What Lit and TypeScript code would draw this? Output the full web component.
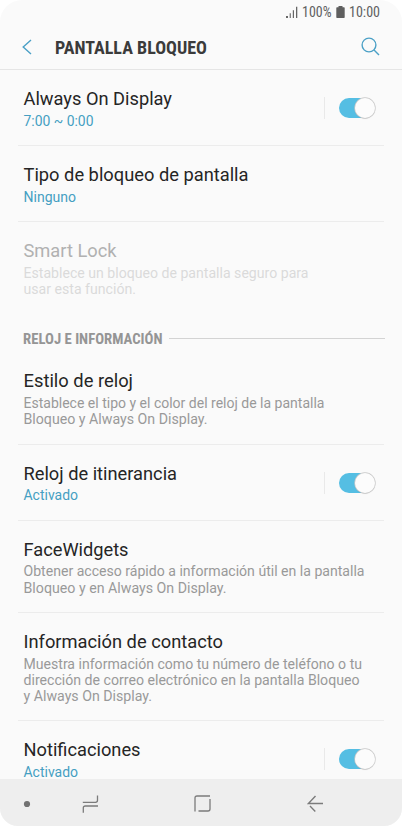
import { LitElement, html, css, svg, nothing } from "lit";
import { customElement, property } from "lit/decorators.js";

@customElement("condensed-text")
class CondensedText extends LitElement {
  @property() text = "";
  @property({ type: Number }) width = 100;
  @property({ type: Number }) size = 14;
  static styles = css`
    :host { display: block; flex: none; }
    svg { display: block; overflow: visible; }
    text { font-family: "Roboto Condensed", Roboto, sans-serif; font-stretch: 75%; fill: currentColor; }
  `;
  render() {
    const h = Math.round(this.size * 1.2);
    return html`<svg width=${this.width} height=${h}>
      ${svg`<text x="0" y=${this.size * 0.95} font-size=${this.size} textLength=${this.width} lengthAdjust="spacingAndGlyphs">${this.text}</text>`}
    </svg>`;
  }
}

@customElement("toggle-switch")
class ToggleSwitch extends LitElement {
  static styles = css`
    :host { display: flex; align-items: center; flex: none; margin-top: -1px; }
    .rule { width: 1px; height: 22px; background: #e9e9e9; margin-right: 14px; }
    .track { width: 35px; height: 20px; border-radius: 10px; background: #55bee3; display: flex; align-items: center; justify-content: flex-end; margin-right: 2px; }
    .knob { width: 20px; height: 20px; border-radius: 50%; background: #fcfcfc; box-shadow: 0 0 0 .7px #c8c8c8, 0 1px 1px rgba(0, 0, 0, .12); margin-right: -1px; flex: none; }
  `;
  render() {
    return html`<div class="rule"></div><div class="track"><div class="knob"></div></div>`;
  }
}

interface Item {
  title: string;
  tw: number;
  lines: [string, number][];
  value?: boolean;
  toggle?: boolean;
  disabled?: boolean;
  last?: boolean;
}

const lock: Item[] = [
  { title: "Always On Display", tw: 148.5, lines: [["7:00 ~ 0:00", 70]], value: true, toggle: true },
  { title: "Tipo de bloqueo de pantalla", tw: 225, lines: [["Ninguno", 52.5]], value: true },
  { title: "Smart Lock", tw: 93, lines: [["Establece un bloqueo de pantalla seguro para", 285], ["usar esta función.", 112.5]], disabled: true, last: true },
];
const clock: Item[] = [
  { title: "Estilo de reloj", tw: 109.5, lines: [["Establece el tipo y el color del reloj de la pantalla", 301], ["Bloqueo y Always On Display.", 184]] },
  { title: "Reloj de itinerancia", tw: 153.5, lines: [["Activado", 54.5]], value: true, toggle: true },
  { title: "FaceWidgets", tw: 105, lines: [["Obtener acceso rápido a información útil en la pantalla", 341], ["Bloqueo y en Always On Display.", 203]] },
  { title: "Información de contacto", tw: 199.5, lines: [["Muestra información como tu número de teléfono o tu", 338.5], ["dirección de correo electrónico en la pantalla Bloqueo", 336], ["y Always On Display.", 128.5]] },
  { title: "Notificaciones", tw: 117, lines: [["Activado", 54.5]], value: true, toggle: true, last: true },
];

@customElement("setting-row")
class SettingRow extends LitElement {
  @property({ attribute: false }) item!: Item;
  static styles = css`
    :host { display: block; padding: 0 18px; }
    .row { box-sizing: border-box; display: flex; align-items: center; justify-content: space-between; padding: 18px 8px 16px 5px; border-bottom: 1px solid #ececec; }
    .row.last { border-color: transparent; }
    .copy { margin-right: -20px; }
    svg { display: block; overflow: visible; }
    .title { font: 400 18.3px Roboto, sans-serif; fill: #252525; }
    .line { font: 400 14px Roboto, sans-serif; fill: #999; }
    .value { fill: #459fc2; }
    .disabled .title { fill: #b1b1b1; }
    .disabled .line { fill: #dadada; }
  `;
  render() {
    const i = this.item;
    return html`<div class="row ${i.last ? "last" : ""} ${i.disabled ? "disabled" : ""}">
      <div class="copy">
        <svg width=${i.tw} height="24.75">${svg`<text class="title" x=".5" y="17.3" textLength=${i.tw} lengthAdjust="spacingAndGlyphs">${i.title}</text>`}</svg>
        ${i.lines.map(([t, w]) => html`<svg width=${w} height="16.25">${svg`<text class="line ${i.value ? "value" : ""}" x=".5" y="13" textLength=${w} lengthAdjust="spacingAndGlyphs">${t}</text>`}</svg>`)}
      </div>
      ${i.toggle ? html`<toggle-switch></toggle-switch>` : nothing}
    </div>`;
  }
}

@customElement("app-root")
class AppRoot extends LitElement {
  static styles = css`
    :host { display: block; background: #fff; }
    .phone { width: 402px; height: 826px; display: flex; flex-direction: column; overflow: hidden; border-radius: 22px 22px 18px 18px; background: #fafafa; }
    svg { display: block; flex: none; }
    .status { height: 24px; flex: none; display: flex; align-items: center; justify-content: flex-end; padding-right: 22px; color: #606060; box-sizing: border-box; }
    .signal { margin-right: 4px; }
    .battery { margin: -1px 4px 0 5px; }
    .header { height: 46px; flex: none; box-sizing: border-box; display: flex; align-items: center; padding: 1px 22px 0; border-bottom: 1px solid #e5e5e5; color: #3b3b3b; }
    .heading { margin: 1px 0 0 23px; flex: 1; font-weight: 700; }
    .search { margin-top: -1px; }
    .list { flex: 1; min-height: 0; overflow: hidden; }
    .section { height: 38px; box-sizing: border-box; padding: 14px 17.5px 4px 23px; display: flex; align-items: center; gap: 6px; color: #959595; font-weight: 700; }
    .section-rule { height: 1px; flex: 1; background: #d3d3d3; }
    .nav { height: 47px; flex: none; background: #eee; display: flex; align-items: center; padding: 2px 0 0 23px; box-sizing: border-box; }
    .recent { margin-left: 51px; }
    .home { margin-left: 95px; }
    .back { margin-left: 96px; }
  `;
  render() {
    return html`<div class="phone">
      <div class="status">
        <svg class="signal" width="12" height="12" viewBox="0 0 12 12" fill="#666"><path d="M0 10h2v2H0zM3.7 7.2h1.1V12H3.7zM6.8 4.2h1.2V12H6.8zM10 .7h1.3V12H10z"/></svg>
        <condensed-text text="100%" .width=${29.5} .size=${14.6}></condensed-text>
        <svg class="battery" width="9" height="12" viewBox="0 0 9 12" fill="#5f5f5f"><path d="M2.5 0h4v1.3H8q.7 0 .7.7v9.3q0 .7-.7.7H1q-.7 0-.7-.7V2q0-.7.7-.7h1.5z"/></svg>
        <condensed-text text="10:00" .width=${31} .size=${14.6}></condensed-text>
      </div>
      <div class="header">
        <svg width="10" height="16" viewBox="0 0 10 16" fill="none" stroke="#4ba0c6" stroke-width="1.4"><path d="M9 .9 1.2 8 9 15.1"/></svg>
        <condensed-text class="heading" text="PANTALLA BLOQUEO" .width=${152} .size=${18}></condensed-text>
        <svg class="search" width="19" height="19" viewBox="0 0 19 19" fill="none" stroke="#4ba0c6" stroke-width="1.4"><circle cx="8" cy="8" r="6.9"/><path d="m12.8 12.8 5.2 5.2"/></svg>
      </div>
      <div class="list">
        ${lock.map((i) => html`<setting-row .item=${i}></setting-row>`)}
        <div class="section"><condensed-text text="RELOJ E INFORMACIÓN" .width=${139.5} .size=${14.5}></condensed-text><div class="section-rule"></div></div>
        ${clock.map((i) => html`<setting-row .item=${i}></setting-row>`)}
      </div>
      <div class="nav">
        <svg width="8" height="8" viewBox="0 0 8 8"><circle cx="4" cy="4" r="3.1" fill="#727272"/></svg>
        <svg class="recent" width="17" height="18" viewBox="0 0 17 18" fill="none" stroke="#7b7b7b" stroke-width="1.3"><path d="M.8 7.3h12.7q2 0 2-2V.6M16 11H3.3q-2 0-2 2v4.7"/></svg>
        <svg class="home" width="17" height="17" viewBox="0 0 17 17" fill="none" stroke="#7b7b7b" stroke-width="1.3"><path d="M1 16.5V3q0-2 2-2h13M16 4v10q0 2-2 2H4.5"/></svg>
        <svg class="back" width="17" height="17" viewBox="0 0 17 17" fill="none" stroke="#7b7b7b" stroke-width="1.4"><path d="M8.5 1 1.4 8.5H16M3 11l5.3 5.4"/></svg>
      </div>
    </div>`;
  }
}
